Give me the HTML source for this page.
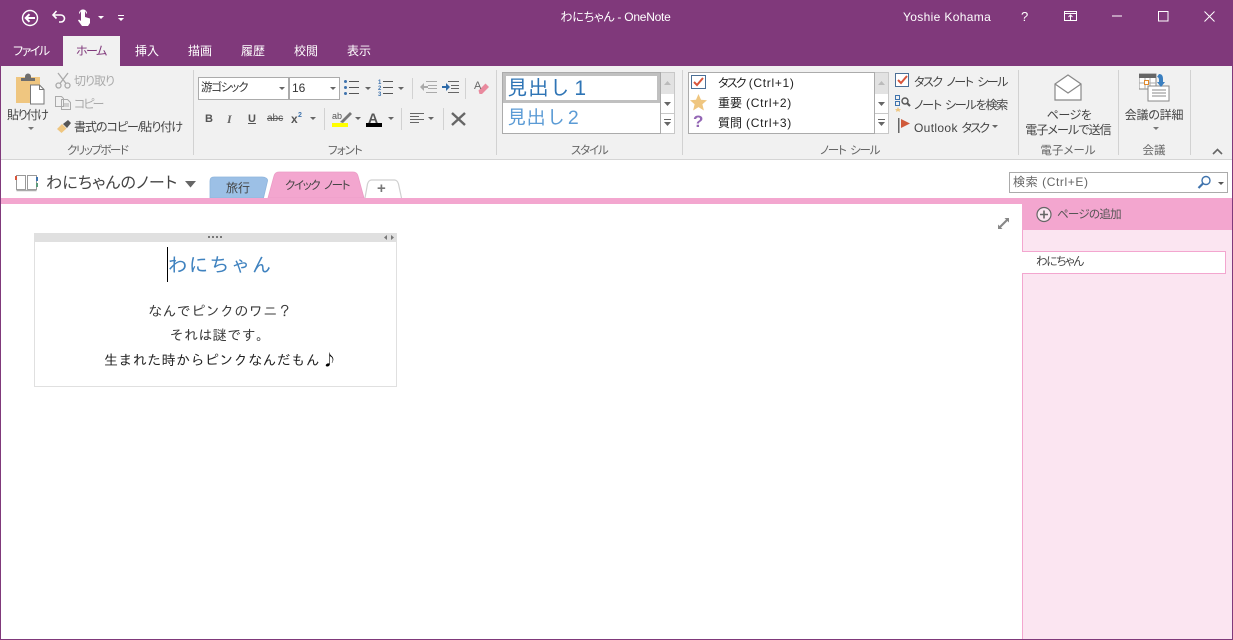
<!DOCTYPE html>
<html lang="ja">
<head>
<meta charset="utf-8">
<title>わにちゃん - OneNote</title>
<style>
html,body{margin:0;padding:0}
body{width:1233px;height:640px;overflow:hidden;position:relative;background:#fff;font-family:"Liberation Sans","Noto Sans CJK JP",sans-serif;font-size:12px;color:#444;font-feature-settings:"palt"}
.a,.t,svg{position:absolute}
.t{white-space:nowrap;line-height:16px}
.w{color:#fff}
.g{color:#aaa}
.c{text-align:center}
.l{letter-spacing:.7px}
.k{letter-spacing:-1.800px}
.n{font-family:"Liberation Sans","IPAGothic",sans-serif;font-feature-settings:normal}
.sep{position:absolute;width:1px;background:#d2d2d2}
.box{position:absolute;background:#fff;border:1px solid #ababab;box-sizing:border-box}
.lbl{color:#666;top:143px}
</style>
</head>
<body>
<!-- title bar -->
<div class="a" style="left:0;top:0;width:1233px;height:66px;background:#80397b"></div>
<svg style="left:20px;top:8px" width="20" height="20" viewBox="0 0 20 20" fill="none" stroke="#fff"><circle cx="10" cy="10" r="7.500" stroke-width="1.400"/><path d="M15 10H6M9.500 6.200 5.700 10l3.800 3.800" stroke-width="2"/></svg>
<svg style="left:51px;top:9px" width="16" height="16" viewBox="0 0 16 16" fill="none" stroke="#fff" stroke-width="1.600"><path d="M2 6h8a3.500 3.500 0 0 1 0 7H8"/><path d="M5.500 2 2 6l3.500 3.500"/></svg>
<svg style="left:76px;top:9px" width="16" height="18" viewBox="0 0 16 18" fill="#fff"><path d="M5 2.500a2 2 0 0 1 4 0V8l5 1.500V14l-2 3H6L2 11.500l1-1 2 1.500z"/><path d="M3.500 4.500a3.500 3.500 0 0 1 7 0" fill="none" stroke="#fff"/></svg>
<svg style="left:98px;top:16px" width="6" height="4" viewBox="0 0 6 4" fill="#fff"><path d="M0 0h6L3 3z"/></svg>
<svg style="left:118px;top:14px" width="6" height="8" viewBox="0 0 6 8" fill="#fff"><path d="M0 1h6v1H0zM0 4h6L3 7z"/></svg>
<div class="t w c" style="left:0;width:1231px;top:9px;letter-spacing:-.25px">わにちゃん - OneNote</div>
<div class="t w" style="left:903px;top:9px;letter-spacing:.35px">Yoshie Kohama</div>
<div class="t w" style="left:1021px;top:9px;font-size:13px">?</div>
<svg style="left:1063px;top:10px" width="15" height="12" viewBox="0 0 15 12" fill="none" stroke="#fff"><path d="M1.500 1.500h12v9h-12zM1.500 3.500h12" /><path d="M7.500 10V5.500M5.500 7l2-2 2 2"/></svg>
<svg style="left:1112px;top:15px" width="11" height="2"><path d="M0 1h10" stroke="#fff"/></svg>
<svg style="left:1158px;top:11px" width="11" height="11" fill="none"><rect x=".5" y=".5" width="9.500" height="9.500" stroke="#fff"/></svg>
<svg style="left:1204px;top:11px" width="11" height="11" fill="none" stroke="#fff"><path d="M.5.500l10 10M10.500.500l-10 10"/></svg>

<!-- tabs -->
<div class="a" style="left:63px;top:36px;width:57px;height:30px;background:#f1f1f1"></div>
<div class="t w" style="left:13px;top:43px;letter-spacing:-1.500px">ファイル</div>
<div class="t" style="left:76px;top:43px;color:#80397b;letter-spacing:-1.500px">ホーム</div>
<div class="t w" style="left:135px;top:43px">挿入</div>
<div class="t w" style="left:188px;top:43px">描画</div>
<div class="t w" style="left:241px;top:43px">履歴</div>
<div class="t w" style="left:294px;top:43px">校閲</div>
<div class="t w" style="left:347px;top:43px">表示</div>

<!-- ribbon -->
<div class="a" style="left:0;top:66px;width:1233px;height:93px;background:#f1f1f1;border-bottom:1px solid #d5d5d5"></div>
<div class="sep" style="left:193px;top:70px;height:85px"></div>
<div class="sep" style="left:496px;top:70px;height:85px"></div>
<div class="sep" style="left:682px;top:70px;height:85px"></div>
<div class="sep" style="left:1018px;top:70px;height:85px"></div>
<div class="sep" style="left:1118px;top:70px;height:85px"></div>
<div class="sep" style="left:1190px;top:70px;height:85px"></div>

<!-- clipboard -->
<svg style="left:15px;top:73px" width="30" height="32" viewBox="0 0 30 32"><path d="M1 4h24v26H1z" fill="#efc680"/><path d="M6 5h14v3H6z" fill="#6e6e6e"/><path d="M10 3.500a3 3 0 0 1 6 0V6h-6z" fill="#6e6e6e"/><path d="M15.500 12h9l4.500 4.500V31h-13.500z" fill="#fff" stroke="#777"/><path d="M24.500 12v4.500H29" fill="none" stroke="#777"/></svg>
<div class="t" style="left:7px;top:107px;letter-spacing:-1.300px">貼り付け</div>
<svg style="left:28px;top:127px" width="6" height="4" fill="#777"><path d="M0 0h6L3 3z"/></svg>
<svg style="left:55px;top:72px" width="16" height="17" viewBox="0 0 16 17" fill="none" stroke="#aaa" stroke-width="1.300"><circle cx="3.500" cy="13.500" r="2.500"/><circle cx="12.500" cy="13.500" r="2.500"/><path d="M11 11.500 3 1M5 11.500 13 1"/></svg>
<div class="t g" style="left:74px;top:73px;letter-spacing:-1px">切り取り</div>
<svg style="left:55px;top:96px" width="16" height="14" viewBox="0 0 16 14" fill="#f1f1f1" stroke="#aaa"><path d="M.5.500h6l2 2v8h-8zM6.500 3.500h6l3 3v7h-9z"/><path d="M8 8h6M8 10h6" /></svg>
<div class="t g" style="left:74px;top:96px;letter-spacing:-2px">コピー</div>
<svg style="left:56px;top:119px" width="16" height="15" viewBox="0 0 16 15"><path d="M1 10 6 5l4.500 4.500-5 4.500z" fill="#efc680"/><path d="M7 5l5-4 3 3-4 5z" fill="#555"/></svg>
<div class="t" style="left:74px;top:119px;letter-spacing:-1px">書式のコピー/貼り付け</div>
<div class="t lbl" style="left:67px;font-size:11.500px;letter-spacing:-1.500px">クリップボード</div>

<!-- font -->
<div class="box" style="left:198px;top:77px;width:91px;height:23px"></div>
<div class="t" style="left:201px;top:80px;font-size:11.500px;color:#333;letter-spacing:-1.200px">游ゴシック</div>
<svg style="left:279px;top:87px" width="6" height="4" fill="#666"><path d="M0 0h6L3 3z"/></svg>
<div class="box" style="left:289px;top:77px;width:51px;height:23px"></div>
<div class="t" style="left:292px;top:80px;color:#333">16</div>
<svg style="left:330px;top:87px" width="6" height="4" fill="#666"><path d="M0 0h6L3 3z"/></svg>
<!-- bullets -->
<svg style="left:344px;top:79px" width="16" height="17" fill="#3f73ad"><circle cx="1.500" cy="2.500" r="1.500"/><circle cx="1.500" cy="8.500" r="1.500"/><circle cx="1.500" cy="14.500" r="1.500"/><path d="M5 2h10v1H5zM5 8h10v1H5zM5 14h10v1H5z" fill="#555"/></svg>
<svg style="left:365px;top:87px" width="6" height="4" fill="#666"><path d="M0 0h6L3 3z"/></svg>
<svg style="left:378px;top:79px" width="16" height="17" fill="#3f73ad" font-size="6" font-weight="bold" font-family="Liberation Sans"><text x="0" y="5">1</text><text x="0" y="11">2</text><text x="0" y="17">3</text><path d="M5 2h10v1H5zM5 8h10v1H5zM5 14h10v1H5z" fill="#555"/></svg>
<svg style="left:398px;top:87px" width="6" height="4" fill="#666"><path d="M0 0h6L3 3z"/></svg>
<div class="sep" style="left:412px;top:78px;height:21px"></div>
<svg style="left:420px;top:80px" width="17" height="14" fill="#aaa"><path d="M6 1h11v1H6zM8 5h9v1H8zM8 8h9v1H8zM6 12h11v1H6zM0 7l4-4v3h4v2H4v3z"/></svg>
<svg style="left:442px;top:80px" width="17" height="14"><path d="M6 1h11v1H6zM9 5h8v1H9zM9 8h8v1H9zM6 12h11v1H6z" fill="#666"/><path d="M8 7 4 3v3H0v2h4v3z" fill="#2e6aa8"/></svg>
<div class="sep" style="left:465px;top:78px;height:21px"></div>
<svg style="left:474px;top:80px" width="16" height="16" viewBox="0 0 16 16"><path d="M8 14l7-7-3.500-3.500-7 7 1 3.500z" fill="#e98a9e"/><text x="0" y="9" font-size="11" fill="#666" font-family="Liberation Sans">A</text></svg>
<div class="t" style="left:205px;top:111px;font-weight:bold;font-size:11px;color:#555">B</div>
<div class="t" style="left:227px;top:111px;font-style:italic;font-size:12px;font-family:'Liberation Serif',serif;font-weight:bold;color:#666">I</div>
<div class="t" style="left:248px;top:111px;font-weight:bold;font-size:11px;color:#555;text-decoration:underline">U</div>
<div class="t" style="left:267px;top:111px;font-size:10px;color:#555;text-decoration:line-through">abc</div>
<div class="t" style="left:291px;top:111px;font-weight:bold;font-size:12px;color:#555">x</div>
<div class="t" style="left:298px;top:108px;font-weight:bold;font-size:7px;color:#3f73ad">2</div>
<svg style="left:310px;top:117px" width="6" height="4" fill="#666"><path d="M0 0h6L3 3z"/></svg>
<div class="sep" style="left:324px;top:108px;height:22px"></div>
<div class="t" style="left:332px;top:108px;font-size:9px;color:#555">ab</div>
<svg style="left:339px;top:110px" width="14" height="13"><path d="M1 12 11 2l2 2L4 13z" fill="#777"/></svg>
<div class="a" style="left:332px;top:123px;width:16px;height:4px;background:#ff0"></div>
<svg style="left:355px;top:117px" width="6" height="4" fill="#666"><path d="M0 0h6L3 3z"/></svg>
<div class="t" style="left:368px;top:110px;font-size:14px;color:#555;font-weight:bold">A</div>
<div class="a" style="left:366px;top:123px;width:16px;height:4px;background:#000"></div>
<svg style="left:388px;top:117px" width="6" height="4" fill="#666"><path d="M0 0h6L3 3z"/></svg>
<div class="sep" style="left:401px;top:108px;height:22px"></div>
<svg style="left:410px;top:113px" width="15" height="11" fill="#666"><path d="M0 0h14v1H0zM0 3h9v1H0zM0 6h14v1H0zM0 9h9v1H0z"/></svg>
<svg style="left:428px;top:117px" width="6" height="4" fill="#666"><path d="M0 0h6L3 3z"/></svg>
<div class="sep" style="left:443px;top:108px;height:22px"></div>
<svg style="left:451px;top:112px" width="16" height="14" fill="none" stroke="#666" stroke-width="2.400"><path d="M1 1l13 12M14 1 1 13"/></svg>
<div class="t lbl" style="left:328px;font-size:11.500px;letter-spacing:-1px">フォント</div>

<!-- style -->
<div class="box" style="left:502px;top:72px;width:159px;height:62px;background:#fff"></div>
<div class="a" style="left:503px;top:73px;width:157px;height:30px;border:3px solid #c0c0c0;box-sizing:border-box;background:#fff"></div>
<div class="t n" style="left:507px;top:76px;font-size:21px;line-height:26px;color:#2e74b5;word-spacing:-1.500px">見出し 1</div>
<div class="t n" style="left:507px;top:106px;font-size:19.500px;line-height:24px;color:#5b9bd5;word-spacing:-3px">見出し 2</div>
<div class="box" style="left:661px;top:72px;width:14px;height:62px;background:#fff;border-color:#c8c8c8;border-left:0"></div>
<div class="a" style="left:661px;top:73px;width:13px;height:21px;background:#e2e2e2"></div>
<svg style="left:664px;top:81px" width="7" height="4" fill="#bbb"><path d="M0 4h7L3.500 0z"/></svg>
<div class="a" style="left:661px;top:113px;width:13px;height:1px;background:#c8c8c8"></div>
<svg style="left:664px;top:102px" width="7" height="4" fill="#666"><path d="M0 0h7L3.500 4z"/></svg>
<svg style="left:664px;top:119px" width="7" height="8" fill="#666"><path d="M0 0h7v1H0zM0 3h7L3.500 7z"/></svg>
<div class="t lbl" style="left:571px;font-size:11.500px;letter-spacing:-1.200px">スタイル</div>

<!-- tags -->
<div class="box" style="left:688px;top:72px;width:187px;height:62px"></div>
<svg style="left:691px;top:74px" width="16" height="16" fill="none"><rect x=".5" y="1.500" width="14" height="13" fill="#fff" stroke="#4b6f96"/><path d="M3 8l3 3 6-7" stroke="#d9553a" stroke-width="2"/></svg>
<svg style="left:690px;top:94px" width="17" height="17" fill="#efc680"><path d="M8.500 0l2.500 5.800 6 .5-4.600 4 1.500 6.200-5.400-3.400-5.400 3.400 1.500-6.200L0 6.300l6-.5z"/></svg>
<div class="t" style="left:693px;top:112px;font-size:17px;line-height:20px;font-weight:bold;color:#9467b5">?</div>
<div class="t l" style="left:718px;top:75px;color:#222"><span class="k">タスク</span> (Ctrl+1)</div>
<div class="t l" style="left:718px;top:95px;color:#222"><span style="letter-spacing:0">重要</span> (Ctrl+2)</div>
<div class="t l" style="left:718px;top:115px;color:#222"><span style="letter-spacing:0">質問</span> (Ctrl+3)</div>
<div class="box" style="left:875px;top:72px;width:14px;height:62px;background:#fff;border-color:#c8c8c8;border-left:0"></div>
<div class="a" style="left:875px;top:73px;width:13px;height:21px;background:#e2e2e2"></div>
<svg style="left:878px;top:81px" width="7" height="4" fill="#bbb"><path d="M0 4h7L3.500 0z"/></svg>
<div class="a" style="left:875px;top:113px;width:13px;height:1px;background:#c8c8c8"></div>
<svg style="left:878px;top:102px" width="7" height="4" fill="#666"><path d="M0 0h7L3.500 4z"/></svg>
<svg style="left:878px;top:119px" width="7" height="8" fill="#666"><path d="M0 0h7v1H0zM0 3h7L3.500 7z"/></svg>
<svg style="left:895px;top:72px" width="16" height="16" fill="none"><rect x=".5" y="1.500" width="13" height="13" fill="#fff" stroke="#4b6f96"/><path d="M3 8l3 3 6-7" stroke="#d9553a" stroke-width="2"/></svg>
<div class="t" style="left:914px;top:74px;letter-spacing:-1.500px;word-spacing:3px">タスク ノート シール</div>
<svg style="left:895px;top:95px" width="17" height="17" fill="none"><rect x=".5" y=".5" width="4" height="4" stroke="#3f73ad"/><rect x=".5" y="6.500" width="4" height="4" stroke="#3f73ad"/><circle cx="10" cy="6" r="3" stroke="#555" stroke-width="1.400"/><path d="M12 8l3 3" stroke="#555" stroke-width="2"/><path d="M3 12l1 2 2 .3-1.500 1.300.5 1.400-2-1-2 1 .5-1.400L0 14.300l2-.3z" fill="#efc680"/></svg>
<div class="t" style="left:914px;top:97px;letter-spacing:-1.200px;word-spacing:2px">ノート シールを検索</div>
<svg style="left:898px;top:118px" width="14" height="16"><path d="M0 0h1.500v15H0z" fill="#666"/><path d="M3 1l9 4.500L3 10z" fill="#d05a3a"/></svg>
<div class="t" style="left:914px;top:120px;letter-spacing:.35px">Outlook <span class="k">タスク</span></div>
<svg style="left:992px;top:125px" width="6" height="4" fill="#666"><path d="M0 0h6L3 3z"/></svg>
<div class="t lbl" style="left:820px;font-size:11.500px;letter-spacing:-1.200px;word-spacing:2.500px">ノート シール</div>

<!-- email -->
<svg style="left:1054px;top:74px" width="28" height="27" viewBox="0 0 28 27" fill="#fff" stroke="#888" stroke-width="1.200"><path d="M1 10 14 1l13 9v16H1z"/><path d="M1 10l13 9 13-9" fill="none"/></svg>
<div class="t c" style="left:1019px;width:100px;top:107px;letter-spacing:-.5px">ページを</div>
<div class="t c" style="left:1018px;width:100px;top:122px;letter-spacing:-.9px">電子メールで送信</div>
<div class="t lbl c" style="left:1018px;width:100px;font-size:11.500px">電子メール</div>

<!-- meeting -->
<svg style="left:1139px;top:73px" width="31" height="31" viewBox="0 0 31 31"><rect x="0" y="1" width="17" height="15" fill="#fff" stroke="#888"/><rect x="0" y="1" width="17" height="4" fill="#666"/><path d="M6 5v11M11 5v11M0 10h17" stroke="#aaa"/><rect x="5.500" y="7.500" width="4" height="4" fill="#fff" stroke="#e08a2e"/><rect x="9" y="13" width="21" height="15" fill="#fff" stroke="#888"/><path d="M13 17h14M13 20h14M13 23h14" stroke="#888"/><path d="M20 1c3 0 4 2 4 5v3h2l-4 5-4-5h2V7c0-2-1-3-2-3z" fill="#3a7fc0"/></svg>
<div class="t c" style="left:1119px;width:70px;top:107px;letter-spacing:-.2px">会議の詳細</div>
<svg style="left:1153px;top:127px" width="6" height="4" fill="#777"><path d="M0 0h6L3 3z"/></svg>
<div class="t lbl c" style="left:1119px;width:70px;font-size:11.500px">会議</div>
<svg style="left:1212px;top:148px" width="11" height="7" fill="none" stroke="#666" stroke-width="1.600"><path d="M1 6l4.500-4.500L10 6"/></svg>

<!-- section bar -->
<svg style="left:15px;top:174px" width="23" height="18" viewBox="0 0 23 18" fill="none" stroke="#999"><path d="M1.500 1.500h9v14h-9zM12.500 1.500h9v14h-9z"/><path d="M1.500 16.500h20" stroke="#aaa" stroke-width="1.400"/><rect x="0" y="2" width="2" height="4" fill="#d9553a" stroke="none"/><rect x="21" y="3" width="2" height="4" fill="#3f73ad" stroke="none"/><rect x="21" y="9" width="2" height="4" fill="#5a9a7a" stroke="none"/></svg>
<div class="t" style="left:46px;top:173px;font-size:16px;line-height:22px;color:#444;letter-spacing:.2px">わにちゃんのノート</div>
<svg style="left:185px;top:181px" width="11" height="7" fill="#666"><path d="M0 0h11L5.500 6.500z"/></svg>
<svg style="left:205px;top:170px" width="205" height="30" viewBox="0 0 205 30">
<path d="M5 28V11c0-2.500 1.500-4 4-4h48c3 0 6 1.500 5.500 4l-4 17z" fill="#9cc0e6" stroke="#8fb5dc" stroke-width=".8"/>
<path d="M160 28l2.500-14c.5-2 2-4 4-4h23c2 0 3.500 2 4 4l3 14" fill="#fff" stroke="#cfcfcf" stroke-width="1.200"/>
<path d="M63 28l6-22c.5-2 2-4 5-4h74c3 0 4.500 2 5 4l6 22z" fill="#f3a6cf" stroke="#eb9cc6" stroke-width=".8"/>
</svg>
<div class="t" style="left:226px;top:180px;color:#444">旅行</div>
<div class="t" style="left:285px;top:178px;font-size:11.500px;color:#444;letter-spacing:-1.400px;word-spacing:3px">クイック ノート</div>
<div class="t" style="left:377px;top:181px;font-size:15px;font-weight:bold;color:#777">+</div>
<div class="box" style="left:1009px;top:172px;width:219px;height:21px"></div>
<div class="t" style="left:1013px;top:174px;color:#666;letter-spacing:.6px">検索 (Ctrl+E)</div>
<svg style="left:1197px;top:175px" width="15" height="15" fill="none" stroke="#3f73ad"><circle cx="9" cy="5.500" r="4" stroke-width="1.400"/><path d="M6 8.500 1.500 13" stroke-width="2.200"/></svg>
<svg style="left:1218px;top:182px" width="6" height="4" fill="#555"><path d="M0 0h6L3 3z"/></svg>

<!-- pink strip & sidebar -->
<div class="a" style="left:0;top:198px;width:1233px;height:6px;background:#f3a6cf"></div>
<div class="a" style="left:1022px;top:204px;width:211px;height:26px;background:#f3a6cf"></div>
<div class="a" style="left:1022px;top:230px;width:211px;height:410px;background:#fbe5f1;border-left:1px solid #f3a6cf;box-sizing:border-box"></div>
<div class="a" style="left:1022px;top:251px;width:204px;height:23px;background:#fff;border:1px solid #f3a6cf;border-left:0;box-sizing:border-box"></div>
<svg style="left:1036px;top:206px" width="17" height="17" fill="none" stroke="#666"><circle cx="8" cy="8.500" r="7" fill="#fbe5f1" stroke-width="1.200"/><path d="M8 4.500v8M4 8.500h8" stroke-width="1.600"/></svg>
<div class="t" style="left:1057px;top:207px;font-size:11.500px;color:#555;letter-spacing:-.7px">ページの追加</div>
<div class="t" style="left:1036px;top:254px;font-size:11.500px;color:#444;letter-spacing:-1.200px">わにちゃん</div>
<svg style="left:998px;top:218px" width="11" height="11" fill="#888"><path d="M6.500 0H11v4.500L9.500 3 3 9.500 4.500 11H0V6.500L1.500 8 8 1.500z"/></svg>

<!-- note container -->
<div class="a" style="left:34px;top:233px;width:363px;height:154px;border:1px solid #e0e0e0;box-sizing:border-box;background:#fff"></div>
<div class="a" style="left:34px;top:233px;width:363px;height:9px;background:#e0e0e0"></div>
<svg style="left:208px;top:236px" width="15" height="3" fill="#777"><path d="M0 0h2v2H0zM4 0h2v2H4zM8 0h2v2H8zM12 0h2v2h-2z"/></svg>
<svg style="left:384px;top:235px" width="12" height="5" fill="#777"><path d="M3 0v5L0 2.500zM7 0v5l3-2.500z"/></svg>
<div class="a" style="left:167px;top:247px;width:1px;height:35px;background:#000"></div>
<div class="t n c" style="left:35px;width:370px;top:252px;font-size:20px;line-height:28px;color:#3f82bf;letter-spacing:1px">わにちゃん</div>
<div class="t n c" style="left:35px;width:370px;top:302px;font-size:14px;line-height:18px;color:#3a3a3a;letter-spacing:.4px">なんでピンクのワニ？</div>
<div class="t n c" style="left:35px;width:370px;top:326px;font-size:14px;line-height:18px;color:#3a3a3a;letter-spacing:.4px">それは謎です。</div>
<div class="t n" style="left:104px;top:351px;font-size:14px;line-height:18px;color:#222;letter-spacing:.4px">生まれた時からピンクなんだもん<span style="color:#000;font-size:15px;line-height:14px;font-family:'Noto Sans CJK JP',sans-serif;font-weight:bold;letter-spacing:0;margin-left:2px">♪</span></div>

<!-- window border -->
<div class="a" style="left:0;top:66px;width:1px;height:574px;background:#80397b"></div>
<div class="a" style="left:1232px;top:66px;width:1px;height:574px;background:#80397b"></div>
<div class="a" style="left:0;top:639px;width:1233px;height:1px;background:#80397b"></div>
</body>
</html>
